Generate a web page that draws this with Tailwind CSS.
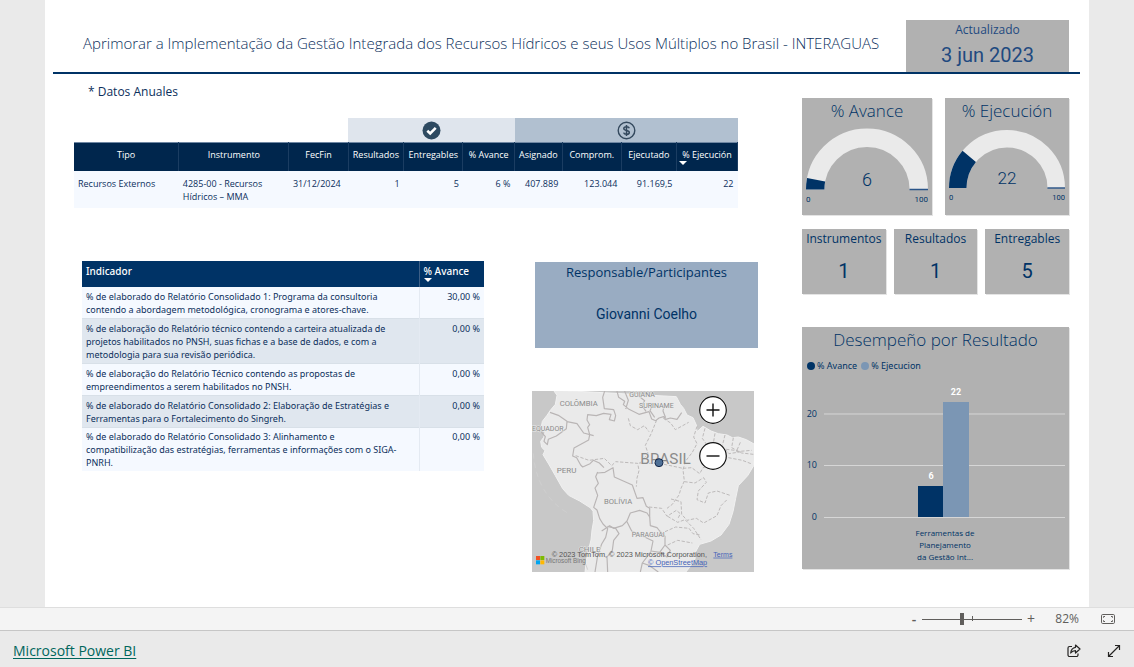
<!DOCTYPE html>
<html lang="pt">
<head>
<meta charset="utf-8">
<meta name="viewport" content="width=device-width, initial-scale=1">
<title>Microsoft Power BI</title>
<script src="https://cdn.jsdelivr.net/npm/@tailwindcss/browser@4"></script>
</head>
<body class="flex min-h-screen flex-col bg-[#eaeaea] font-['Open_Sans',sans-serif] text-[#0b2f5c]">
<main class="mx-[45px] flex-1 bg-white pb-[35px]">
  <header class="ml-2 mr-[9px] flex items-end border-b-2 border-[#003366] pt-5">
    <h1 class="min-w-0 flex-1 whitespace-nowrap pb-[17px] pl-[30px] text-[15px] font-[350] leading-6">Aprimorar a Implementação da Gestão Integrada dos Recursos Hídricos e seus Usos Múltiplos no Brasil - INTERAGUAS</h1>
    <div class="mr-[11px] h-[52px] w-[163px] shrink-0 bg-[#b1b1b1] text-center text-[#1f4a80]">
      <p class="pt-px text-xs leading-[18px]">Actualizado</p>
      <p class="pt-1 font-['Roboto',sans-serif] text-xl leading-6">3 jun 2023</p>
    </div>
  </header>

  <div class="flex">
    <div class="min-w-0 flex-1 pl-[29px] pt-2">
      <p class="pl-3.5 text-xs leading-5">* Datos Anuales</p>
      <div class="mr-16 pt-4">
        <table class="w-full table-fixed border-collapse text-[9px] leading-[13px]">
          <colgroup>
            <col class="w-[15.8%]"><col class="w-[16.6%]"><col class="w-[8.9%]"><col class="w-[8.4%]"><col class="w-[8.9%]"><col class="w-[7.8%]"><col class="w-[7.2%]"><col class="w-[8.9%]"><col class="w-[8.3%]"><col class="w-[9.2%]">
          </colgroup>
          <thead>
            <tr class="h-6">
              <td colspan="3"></td>
              <th colspan="3" class="bg-[#dfe5ed]">
                <svg class="mx-auto size-5" viewBox="0 0 20 20" role="img" aria-label="Resultados"><circle cx="10.500" cy="10.500" r="9" fill="#2e4a61"/><path d="M6.300 10.800l2.900 2.700 5.500-5.700" fill="none" stroke="#fff" stroke-width="2.600"/></svg>
              </th>
              <th colspan="4" class="bg-[#b1c0d0]">
                <svg class="mx-auto size-5" viewBox="0 0 20 20" role="img" aria-label="Valores"><g fill="none" stroke="#34495e" transform="translate(.5 .5)"><circle cx="10" cy="10" r="8.300" stroke-width="1.400"/><path d="M12.800 7.800c-.3-1-1.400-1.600-2.800-1.600s-2.700.7-2.700 1.900c0 2.600 5.500 1.200 5.500 3.800 0 1.200-1.200 1.900-2.800 1.900s-2.600-.7-2.900-1.700M10 4.500v11" stroke-width="1.500"/></g></svg>
              </th>
            </tr>
            <tr class="h-[29px] border-t border-[#6f87a3] bg-[#00264d] align-top text-white *:whitespace-nowrap *:border-r *:border-r-[#1b3d62] *:p-0 *:pt-[5px] *:text-center *:font-medium">
              <th scope="col">Tipo</th><th scope="col">Instrumento</th><th scope="col">FecFin</th><th scope="col">Resultados</th><th scope="col">Entregables</th><th scope="col">% Avance</th><th scope="col">Asignado</th><th scope="col">Comprom.</th><th scope="col">Ejecutado</th>
              <th scope="col">% Ejecución<svg class="ml-0.5 block h-1 w-2" viewBox="0 0 8 4"><path d="M0 0h8L4 4z" fill="#fff"/></svg></th>
            </tr>
          </thead>
          <tbody>
            <tr class="bg-[#f5f9ff] align-top *:px-1 *:pb-[5px] *:pt-1.5">
              <td>Recursos Externos</td><td>4285-00 - Recursos<br>Hídricos – MMA</td><td class="whitespace-nowrap">31/12/2024</td><td class="text-right">1</td><td class="text-right">5</td><td class="text-right">6 %</td><td class="text-right">407.889</td><td class="text-right">123.044</td><td class="text-right">91.169,5</td><td class="text-right">22</td>
            </tr>
          </tbody>
        </table>
      </div>

      <div class="mr-11 flex items-start gap-12 pl-2 pt-[53px]">
        <table class="min-w-0 flex-1 border-collapse font-['Noto_Sans',sans-serif] text-[9px] leading-[13px]">
          <thead>
            <tr class="h-[26px] bg-[#003366] text-left align-top text-[10px] text-white *:px-1 *:pb-0 *:pt-1 *:font-medium">
              <th scope="col" class="border-r border-[#3d5f86]">Indicador</th>
              <th scope="col" class="w-[65px] whitespace-nowrap">% Avance<svg class="block h-1 w-2" viewBox="0 0 8 4"><path d="M0 0h8L4 4z" fill="#fff"/></svg></th>
            </tr>
          </thead>
          <tbody class="align-top *:border-b *:border-[#d8e0e8] *:last:border-0 *:even:bg-[#e0e7ef] *:odd:bg-[#f5f9ff]">
            <tr class="*:px-1 *:pb-0.5 *:pt-[3px]"><td class="border-r border-r-[#e4eaf2]">% de elaborado do Relatório Consolidado 1: Programa da consultoria<br>contendo a abordagem metodológica, cronograma e atores-chave.</td><td class="text-right">30,00 %</td></tr>
            <tr class="*:px-1 *:pb-0.5 *:pt-[3px]"><td class="border-r border-r-[#e4eaf2]">% de elaboração do Relatório técnico contendo a carteira atualizada de<br>projetos habilitados no PNSH, suas fichas e a base de dados, e com a<br>metodologia para sua revisão periódica.</td><td class="text-right">0,00 %</td></tr>
            <tr class="*:px-1 *:pb-0.5 *:pt-[3px]"><td class="border-r border-r-[#e4eaf2]">% de elaboração do Relatório Técnico contendo as propostas de<br>empreendimentos a serem habilitados no PNSH.</td><td class="text-right">0,00 %</td></tr>
            <tr class="*:px-1 *:pb-0.5 *:pt-[3px]"><td class="border-r border-r-[#e4eaf2]">% de elaborado do Relatório Consolidado 2: Elaboração de Estratégias e<br>Ferramentas para o Fortalecimento do Singreh.</td><td class="text-right">0,00 %</td></tr>
            <tr class="*:px-1 *:pb-0.5 *:pt-0.5"><td class="border-r border-r-[#e4eaf2]">% de elaborado do Relatório Consolidado 3: Alinhamento e<br>compatibilização das estratégias, ferramentas e informações com o SIGA-<br>PNRH.</td><td class="text-right">0,00 %</td></tr>
          </tbody>
        </table>

        <div class="w-[226px] shrink-0 pt-px">
          <section class="ml-[3px] h-[86px] bg-[#99acc2] text-center text-[#003366]">
            <h2 class="pt-px text-[13px] leading-[18px]">Responsable/Participantes</h2>
            <p class="pt-6 font-['Roboto',sans-serif] text-sm leading-[18px]">Giovanni Coelho</p>
          </section>
          <section class="relative mr-1 mt-[43px] overflow-hidden bg-[#c8c8c8]" aria-label="Mapa">
            <svg class="block w-full font-['Roboto',sans-serif]" viewBox="21 18 666 543">
              <path fill="#eaeaea" stroke="#f1f1f1" stroke-width="3" d="M85 15l11 16-5 27-15 18-10 15-14 18-4 22 12 12-4 14-9 12 3 18 10 10-6 12 17 28 20 35 22 39 18 20 33 17 33 21 7 10 2 28-5 28-3 30-8 32-6 30-4 35H482l14-18 14-22 2-22 12-22 34-10 30-18 24-32 12-38 8-40 8-38 28-30 18-30 3-22V178l-25-14-24-8-18 2-16-8-26-4-22-8-24-14-18 16-2-20-10-22-18-8-10-20-10-12-12-23z"/>
              <g fill="none" stroke="#b9b5b5" stroke-width="3.500" stroke-linejoin="round">
                <path d="M240 15l-7 22 5 34 28 3 6 18-4 16-15-4 5-16-22-3-22 7-26-3-2 16 8 14-6 8 6 22-3 16-44 24-4 24 12 5 12 22 6 6 22-10 10-10 18 8 14 14"/>
                <path d="M75 82l25 9 26 18-2 22-30 22-24 10-3 16-10-10 4-14-12-14M126 110l30 6 20 28 30 8M275 15l6 22 18 12-4 10 17 14 30 15 30-8 8 22 12 5 10-8 14-4 6 8 14-4 20 4 14-20M302 72l8-26-12-30M345 15l-4 18 18 14-8 14 12 18M385 55l-10 22 14 20M418 58l-4 20 8 20"/>
                <path d="M218 261l-6 14 8 20-10 14 8 22-12 36 10 8 8 26 10 16 14 14-6 26-12 20-12 35-8 49M218 264l22-2 24-14 4 28 32 14 22 10 14 40 18-2 10 26 10 6 0 26-8-12-22-8-28 8-10 24-14 14-26 8-12-8-24 16"/>
                <path d="M306 410l14 28 34 16 30 14-6 30 26 4 16-22 0-26-16-16-8-10-20-6-2-26M378 500l-26 34-6 27M404 502l22 14 10-20-16-16M352 534l22 8 26 19M248 424l24 6 10 16-16 20-4 30-16 20 2 45"/>
              </g>
              <g fill="none" stroke="#bdbaba" stroke-width="3" stroke-dasharray="10 5">
                <path d="M152 212l40 14 46-6 22 22 12-12 66 5 4 22-6 22-2 26M310 100l6 22 22 12 20-12 14 18M395 105l-16 40-18 36 8 24-26 32M415 100l22 14 14 20 22-12 18-10M342 234l66 2 66 14M516 124l-10 32 10 20-14 26-20 26-8 26 4 34-10 22-6 20-20 28-16 12M372 366l38 4 16 24 28-18 12 10-8 16M540 130l-8 30 14 20 8 30M570 145l-6 36 22 24 18-12 34 4M600 150l-8 32 20 24 38-6M625 158l-5 30 30 16 35 4M646 172l-12 28 46-4M610 218l42 8 26 10M474 250l26-2 24 18 10-18 18-2M478 290l32 4 26-16 8 14-24 26-4 26 24 10 10-30 26-6 42 14M438 342l30 8 2 38 16 18 28-6 22 14 40-22 12-30 20-20M428 394l30 18 22-8 26 26 22 34M420 440l32-14 40 4 12 16 22 4M428 480l30-14 44 8"/>
              </g>
              <path d="M25 205c5 80 42 145 105 180" fill="none" stroke="#d2d2d2" stroke-width="2" stroke-dasharray="16 12"/>
              <path d="M148 512l30 14 10 28" fill="none" stroke="#d2d2d2" stroke-width="3"/>
              <g fill="#8b8b8b" stroke="#eaeaea" stroke-width="3" paint-order="stroke" font-size="21">
                <text x="104" y="63" font-size="23">COLÔMBIA</text><text x="313" y="35">GUIANA</text><text x="342" y="69">SURINAME</text><text x="21" y="137">EQUADOR</text><text x="95" y="264" font-size="24">PERU</text><text x="237" y="357" font-size="23">BOLÍVIA</text><text x="320" y="455">PARAGUAI</text><text x="161" y="500" font-size="24">CHILE</text>
                <text x="346" y="237" font-size="46">BRASIL</text>
              </g>
              <circle cx="402" cy="233" r="12" fill="#4f7096" stroke="#14284b" stroke-width="3"/>
              <path fill="#f25022" d="M33 513h12v12H33z"/><path fill="#7fba00" d="M46 513h12v12H46z"/><path fill="#00a4ef" d="M33 526h12v12H33z"/><path fill="#ffb900" d="M46 526h12v12H46z"/>
              <g font-family="Liberation Sans, sans-serif" font-size="21" fill="#555"><text x="62" y="534" font-size="19" fill="#777">Microsoft Bing</text><text x="80" y="515" font-size="22">© 2023 TomTom, © 2023 Microsoft Corporation,</text>
              <a href="#terms"><text x="565" y="515" fill="#4462b8" text-decoration="underline">Terms</text></a>
              <a href="#osm"><text x="369" y="541" font-size="22" fill="#4462b8" text-decoration="underline">© OpenStreetMap</text></a></g>
            </svg>
            <div class="absolute right-[27px] top-[5px] flex flex-col gap-[18px]">
              <button aria-label="Ampliar" class="size-7 rounded-full bg-white"><svg viewBox="0 0 28 28" fill="none" stroke="#111"><circle cx="14" cy="14" r="13.300" stroke-width="1.200"/><path d="M7.500 14h13M14 7.500v13" stroke-width="1.400"/></svg></button>
              <button aria-label="Reduzir" class="size-7 rounded-full bg-white"><svg viewBox="0 0 28 28" fill="none" stroke="#111"><circle cx="14" cy="14" r="13.300" stroke-width="1.200"/><path d="M7.500 14h13" stroke-width="1.400"/></svg></button>
            </div>
          </section>
        </div>
      </div>
    </div>

    <aside class="mr-5 w-[267px] shrink-0 pt-6 text-[#003366]">
      <div class="flex gap-[13px] text-center">
        <section class="h-[117px] w-[130px] bg-[#b1b1b1] px-1 shadow-[1px_1px_0_#e4e4e4]">
          <h2 class="pt-px text-[17px] font-[350] leading-6">% Avance</h2>
          <svg class="mt-[5px] w-full font-['Roboto',sans-serif]" viewBox="0 0 122 78">
            <path d="M9.200 61.500a51.800 51.800 0 0 1 103.600 0" fill="none" stroke="#eaeaea" stroke-width="18.400"/>
            <path d="M9.200 61.500a51.800 51.800 0 0 1 .9-9.700" fill="none" stroke="#003366" stroke-width="18.400"/>
            <path d="M103.500 61.500H122" stroke="#2a5488" stroke-width="1.500"/>
            <text x="61" y="58" font-size="18" font-weight="300" text-anchor="middle" fill="#003366">6</text>
            <g font-size="8" fill="#003366"><text x="0" y="74">0</text><text x="122" y="74" text-anchor="end">100</text></g>
          </svg>
        </section>
        <section class="h-[117px] w-[124px] bg-[#b1b1b1] px-1 shadow-[1px_1px_0_#e4e4e4]">
          <h2 class="whitespace-nowrap pt-px text-[17px] font-[350] leading-6">% Ejecución</h2>
          <svg class="mt-[7px] w-full font-['Roboto',sans-serif]" viewBox="0 0 122 78">
            <path d="M9.200 61a51.800 51.800 0 0 1 103.600 0" fill="none" stroke="#eaeaea" stroke-width="18.400"/>
            <path d="M9.200 61a51.800 51.800 0 0 1 12.070-33.200" fill="none" stroke="#003366" stroke-width="18.400"/>
            <path d="M103.500 61H122" stroke="#2a5488" stroke-width="1.500"/>
            <text x="61" y="57" font-size="18" font-weight="300" text-anchor="middle" fill="#003366">22</text>
            <g font-size="8" fill="#003366"><text x="0" y="74">0</text><text x="122" y="74" text-anchor="end">100</text></g>
          </svg>
        </section>
      </div>

      <div class="flex gap-2 pt-3.5 text-center">
        <section class="h-[65px] flex-1 bg-[#b1b1b1] shadow-[1px_1px_0_#e4e4e4]"><h2 class="text-xs leading-5">Instrumentos</h2><p class="pt-2.5 font-['Roboto',sans-serif] text-xl leading-6">1</p></section>
        <section class="h-[65px] flex-1 bg-[#b1b1b1] shadow-[1px_1px_0_#e4e4e4]"><h2 class="text-xs leading-5">Resultados</h2><p class="pt-2.5 font-['Roboto',sans-serif] text-xl leading-6">1</p></section>
        <section class="h-[65px] flex-1 bg-[#b1b1b1] shadow-[1px_1px_0_#e4e4e4]"><h2 class="text-xs leading-5">Entregables</h2><p class="pt-2.5 font-['Roboto',sans-serif] text-xl leading-6">5</p></section>
      </div>

      <section class="mt-[33px] bg-[#b1b1b1] shadow-[1px_1px_0_#e4e4e4]">
        <h2 class="pt-px text-center text-[17px] font-[350] leading-6">Desempeño por Resultado</h2>
        <ul class="flex gap-1 pl-[5px] pt-[7px] font-['Noto_Sans',sans-serif] text-[9px] leading-[13px]">
          <li class="flex items-center gap-0.5"><span class="size-2 rounded-full bg-[#003366]"></span>% Avance</li>
          <li class="flex items-center gap-0.5"><span class="size-2 rounded-full bg-[#7b96b4]"></span>% Ejecucion</li>
        </ul>
        <svg class="block w-full" viewBox="0 0 267 197">
          <path d="M22 42h241M22 93.500h241M22 145.500h241" stroke="#d6d6d6"/>
          <path d="M116 114h25v31h-25z" fill="#003366"/><path d="M141 30h26v115h-26z" fill="#7b96b4"/>
          <g font-size="9" fill="#003366"><text x="15" y="45" text-anchor="end">20</text><text x="15" y="96" text-anchor="end">10</text><text x="15" y="148" text-anchor="end">0</text></g>
          <g font-family="Roboto, sans-serif" font-size="9" font-weight="700" fill="#fff" text-anchor="middle"><text x="129" y="107">6</text><text x="154" y="23">22</text></g>
          <g font-size="8" fill="#003366" text-anchor="middle"><text x="143" y="164">Ferramentas de</text><text x="143" y="176">Planejamento</text><text x="143" y="188">da Gestão Int...</text></g>
        </svg>
      </section>
    </aside>
  </div>
</main>

<div class="flex h-6 items-center justify-end border-b border-t border-b-[#c6c6c6] border-t-[#dedede] bg-[#f4f4f4] pr-[19px] text-xs text-[#605e5c]">
  <button aria-label="Reduzir zoom" class="w-2.5 text-center text-sm font-semibold leading-4">-</button>
  <div class="relative mx-px flex h-4 w-[104px] items-center">
    <input type="range" min="0" max="100" value="40" aria-label="Zoom" class="mx-0.5 h-4 w-[100px] appearance-none bg-transparent [&::-webkit-slider-runnable-track]:h-px [&::-webkit-slider-runnable-track]:bg-[#605e5c] [&::-webkit-slider-thumb]:-mt-1.5 [&::-webkit-slider-thumb]:h-3 [&::-webkit-slider-thumb]:w-1 [&::-webkit-slider-thumb]:appearance-none [&::-webkit-slider-thumb]:bg-[#605e5c]">
    <span class="pointer-events-none absolute left-1/2 top-[5px] h-[5px] w-px bg-[#605e5c]"></span>
  </div>
  <button aria-label="Aumentar zoom" class="w-3 text-center text-sm leading-4">+</button>
  <span class="w-[42px] text-right">82%</span>
  <button aria-label="Ajustar à página" class="ml-[22px]"><svg class="h-3 w-3.5" viewBox="0 0 14 12" fill="none" stroke="#605e5c"><rect x=".5" y="1.500" width="13" height="9" rx="1.200"/><path d="M2.500 4.700V3.500H4M10 3.500h1.500v1.200M2.500 7.300v1.200H4M10 8.500h1.500V7.300"/></svg></button>
</div>
<footer class="flex h-9 items-center justify-between pb-px pl-[13px] pr-[13px] pt-1">
  <a href="https://powerbi.microsoft.com" class="text-sm leading-5 text-[#00665c] underline underline-offset-2">Microsoft Power BI</a>
  <div class="flex items-center gap-[26px] text-[#252423]">
    <button aria-label="Compartilhar"><svg class="block size-3.5" viewBox="0 0 14 14" fill="none" stroke="currentColor" stroke-width="1.200"><path d="M5 2.500H2.500a1.500 1.500 0 0 0-1.500 1.500v7a1.500 1.500 0 0 0 1.500 1.500h7A1.500 1.500 0 0 0 11 11V9.500"/><path d="M8.500 1l4.500 4-4.500 4V6.700C6.500 6.700 5 7.300 3.700 9c.3-3 2-5.300 4.800-5.700z" stroke-linejoin="round"/></svg></button>
    <button aria-label="Tela inteira"><svg class="block size-3.5" viewBox="0 0 14 14" fill="none" stroke="currentColor" stroke-width="1.200"><path d="M1.500 12.500l11-11M8 1.500h4.500V6M1.500 8v4.500H6"/></svg></button>
  </div>
</footer>
</body>
</html>
